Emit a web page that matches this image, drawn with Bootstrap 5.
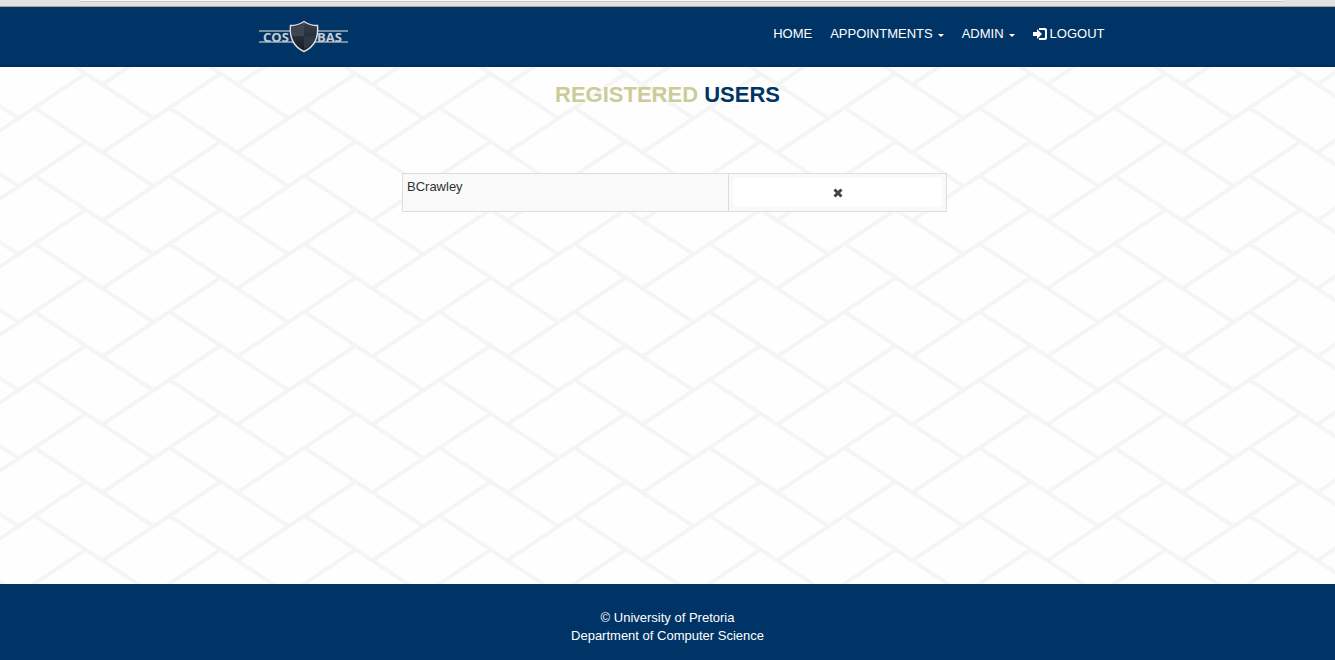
<!DOCTYPE html>
<html lang="en">
<head>
<meta charset="utf-8">
<meta name="viewport" content="width=device-width, initial-scale=1">
<title>COSBAS - Registered Users</title>
<link href="https://cdn.jsdelivr.net/npm/bootstrap@5.3.0/dist/css/bootstrap.min.css" rel="stylesheet">
<style>
  :root { --navy: #003466; --sand: #cccc99; }
  body { font-family: "Liberation Sans", Arial, sans-serif; font-size: 13px; line-height: 18px; color: #333; }
  .window-edge { height: 7px; background: #e2e2e0; border-bottom: 1px solid #a5a5a0; }
  .window-edge-field { height: 2px; background: #f4f5f4; border-bottom: 1px solid #c3c8c4; margin: 0 52px 0 80px; }
  .site-header { background: var(--navy); border-bottom: 2px solid #002f62; height: 60px; }
  .site-width { max-width: 878px; padding: 0 2px 0 30px; }
  .main-nav { gap: 18px; padding-top: 18px; }
  .main-nav .nav-link { color: #fff; font-size: 13px; line-height: 18px; padding: 0; }
  .main-nav .dropdown-toggle::after { border-top-width: 3px; border-left-width: 3px; border-right-width: 3px; margin-left: 5px; vertical-align: 1px; }
  .logout-link { gap: 3px; }
  .logo-text { font: bold 13px "Open Sans", sans-serif; fill: #c9ccd0; }
  .site-main {
    background-color: #fefefe;
    background-image: url("data:image/svg+xml,%3Csvg xmlns='http://www.w3.org/2000/svg' width='135' height='68'%3E%3Cg stroke='%23f5f5f5' stroke-width='4' fill='none'%3E%3Cpath d='M0 0L118 78M0 -68L118 10M0 68L118 146M135 0L253 78M135 68L253 146M135 -68L253 10'/%3E%3Cpath d='M68 44L185 -34M68 112L185 34M-67 44L50 -34M-67 112L50 34M68 -24L185 -102M-67 180L50 102M68 180L185 102'/%3E%3C/g%3E%3C/svg%3E");
    background-position: 35px 41px;
  }
  .page-title { font-size: 22px; line-height: 24px; font-weight: bold; color: var(--navy); padding-top: 16px; }
  .page-title span { color: var(--sand); }
  .users-wrap { max-width: 559px; padding: 66px 0 0 14px; }
  .users-table { table-layout: fixed; background: #f9f9f9; border-color: #ddd; color: #333; }
  .users-table > tbody > tr > td { background: #f9f9f9; color: #333; padding: 4px; }
  .btn-remove { background: #fff; border: 0; border-radius: 4px; height: 29px; color: #444; padding: 0; }
  .site-footer { background: var(--navy); color: #fff; padding: 25px 0 15px; }
</style>
</head>
<body class="d-flex flex-column min-vh-100">
<div class="window-edge"><div class="window-edge-field"></div></div>
<header class="site-header">
  <div class="container-fluid site-width d-flex justify-content-between align-items-start">
    <a href="#" class="mt-2" aria-label="COSBAS home">
      <svg class="d-block" width="90" height="42" viewBox="0 0 90 42">
        <defs><linearGradient id="steel" x2="0" y2="1"><stop stop-color="#3b414c"/><stop offset="1" stop-color="#151b28"/></linearGradient></defs>
        <path d="M0 16H89M0 27H89" stroke="#9eabb8" stroke-width="1.500"/>
        <text class="logo-text" x="4" y="27">COS</text>
        <text class="logo-text" x="58" y="27">BAS</text>
        <path d="M45 6.500C40 10 36 10.500 31.500 10.500C30.500 21 33 31 45 36.500C57 31 59.500 21 58.500 10.500C54 10.500 50 10 45 6.500Z" fill="url(#steel)" stroke="#dcdcdc" stroke-width="1.500"/>
        <path d="M45 9V21H33Q32 16 32.500 12Q40 12 45 9Z" fill="#3f4651"/>
        <path d="M45 21H57Q55 30 45 34Z" fill="#2f3845"/>
      </svg>
    </a>
    <nav class="nav main-nav flex-nowrap" aria-label="Main">
      <a class="nav-link" href="#">HOME</a>
      <a class="nav-link dropdown-toggle" href="#" data-bs-toggle="dropdown">APPOINTMENTS</a>
      <a class="nav-link dropdown-toggle" href="#" data-bs-toggle="dropdown">ADMIN</a>
      <a class="nav-link logout-link d-flex align-items-center" href="#">
        <svg width="14" height="12" viewBox="0 0 14 12" fill="currentColor" aria-hidden="true"><path d="M0 4H4V1L9 6L4 11V8H0Z"/><path d="M6 0H12Q14 0 14 2V10Q14 12 12 12H6V10H11Q12 10 12 9V3Q12 2 11 2H6Z"/></svg>
        <span>LOGOUT</span>
      </a>
    </nav>
  </div>
</header>
<main class="site-main flex-grow-1">
  <h1 class="page-title text-center mb-0"><span>REGISTERED</span> USERS</h1>
  <div class="container-fluid users-wrap">
    <table class="table table-bordered users-table mb-0">
      <colgroup><col style="width:60%"><col style="width:40%"></colgroup>
      <tbody>
        <tr>
          <td>BCrawley</td>
          <td><button type="button" class="btn btn-remove w-100 d-flex align-items-center justify-content-center" aria-label="Remove BCrawley">
            <svg width="10" height="10" viewBox="0 0 10 10" aria-hidden="true"><path d="M1.500 1.500L8.500 8.500M8.500 1.500L1.500 8.500" stroke="currentColor" stroke-width="3"/></svg>
          </button></td>
        </tr>
      </tbody>
    </table>
  </div>
</main>
<footer class="site-footer text-center">
  <div>© University of Pretoria</div>
  <div>Department of Computer Science</div>
</footer>
<script src="https://cdn.jsdelivr.net/npm/bootstrap@5.3.0/dist/js/bootstrap.bundle.min.js"></script>
</body>
</html>
